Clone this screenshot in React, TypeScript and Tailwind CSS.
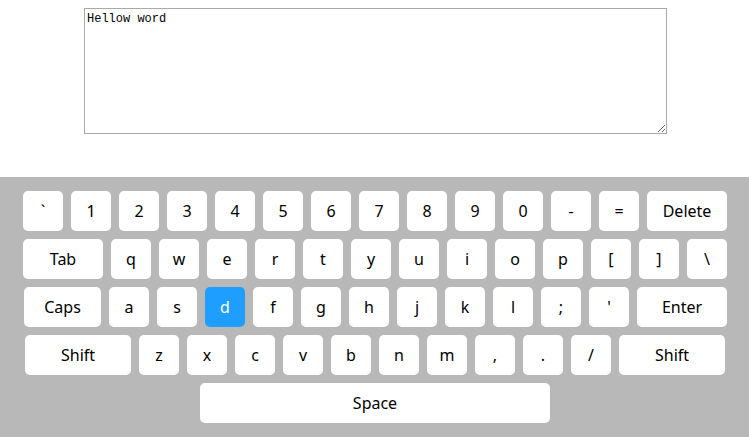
import { useState } from "react";

type Key = { label: string; w?: string };

const rows: { ml: string; keys: Key[] }[] = [
  {
    ml: "ml-[23px]",
    keys: [
      { label: "`" }, { label: "1" }, { label: "2" }, { label: "3" }, { label: "4" },
      { label: "5" }, { label: "6" }, { label: "7" }, { label: "8" }, { label: "9" },
      { label: "0" }, { label: "-" }, { label: "=" }, { label: "Delete", w: "w-[80px]" },
    ],
  },
  {
    ml: "ml-[23px]",
    keys: [
      { label: "Tab", w: "w-[80px]" }, { label: "q" }, { label: "w" }, { label: "e" },
      { label: "r" }, { label: "t" }, { label: "y" }, { label: "u" }, { label: "i" },
      { label: "o" }, { label: "p" }, { label: "[" }, { label: "]" }, { label: "\\" },
    ],
  },
  {
    ml: "ml-[24px]",
    keys: [
      { label: "Caps", w: "w-[77px]" }, { label: "a" }, { label: "s" }, { label: "d" },
      { label: "f" }, { label: "g" }, { label: "h" }, { label: "j" }, { label: "k" },
      { label: "l" }, { label: ";" }, { label: "'" }, { label: "Enter", w: "w-[90px]" },
    ],
  },
  {
    ml: "ml-[25px]",
    keys: [
      { label: "Shift", w: "w-[106px]" }, { label: "z" }, { label: "x" }, { label: "c" },
      { label: "v" }, { label: "b" }, { label: "n" }, { label: "m" }, { label: "," },
      { label: "." }, { label: "/" }, { label: "Shift", w: "w-[106px]" },
    ],
  },
  { ml: "ml-[200px]", keys: [{ label: "Space", w: "w-[350px]" }] },
];

export default function App() {
  const [text, setText] = useState("Hellow word");
  const active = "d";

  return (
    <div className="w-[749px] h-[437px] bg-white overflow-hidden font-['Noto_Sans','Noto_Sans_CJK_SC',sans-serif]">
      {/* Input */}
      <div className="pt-[8px] h-[177px]">
        <textarea
          value={text}
          onChange={(e) => setText(e.target.value)}
          className="block ml-[84px] w-[583px] h-[126px] border border-[#a9a9a9] px-[2px] py-[2px] text-[12px] leading-[16px] text-black font-['Liberation_Mono',monospace] outline-none"
        />
      </div>

      {/* Keyboard */}
      <div className="bg-[#b8b8b8] h-[260px] py-[14px] flex flex-col items-start gap-[8px]">
        {rows.map((row, i) => (
          <div key={i} className={`flex gap-[8px] ${row.ml}`}>
            {row.keys.map((k, j) => (
              <div
                key={j}
                className={`${k.w ?? "w-[40px]"} h-[40px] rounded-[5px] flex items-center justify-center text-[16px] ${
                  k.label === active ? "bg-[#1e9fff] text-white" : "bg-white text-black"
                }`}
              >
                {k.label}
              </div>
            ))}
          </div>
        ))}
      </div>
    </div>
  );
}
